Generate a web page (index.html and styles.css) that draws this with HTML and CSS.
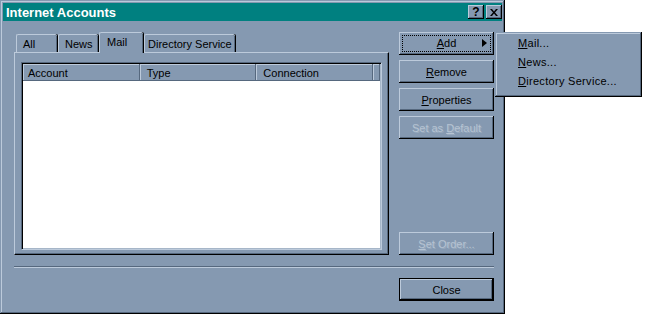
FILE: index.html
```html
<!DOCTYPE html>
<html lang="en">
<head>
    <meta charset="UTF-8">
    <meta name="viewport" content="width=device-width, initial-scale=1.0">
    <title>Internet Accounts</title>
    <link rel="stylesheet" href="styles.css">
</head>
<body>
    <div class="window">
        <div class="titlebar">
            <span class="title">Internet Accounts</span>
            <div class="title-buttons">
                <span class="tbtn">?</span>
                <span class="tbtn close-x">
                    <svg width="8" height="7" viewBox="0 0 8 7"><path d="M0 0h2l2 2.5L6 0h2L5 3.5 8 7H6L4 4.5 2 7H0l3-3.5z" fill="#000"/></svg>
                </span>
            </div>
        </div>

        <div class="dialog">
            <div class="main">
                <div class="tabs-area">
                    <div class="tabs">
                        <div class="tab tab-all">All</div>
                        <div class="tab tab-news">News</div>
                        <div class="tab tab-mail selected">Mail</div>
                        <div class="tab tab-dir">Directory Service</div>
                    </div>
                    <div class="panel">
                        <div class="listview">
                            <div class="lv-header">
                                <div class="col">Account</div>
                                <div class="col">Type</div>
                                <div class="col">Connection</div>
                                <div class="col filler"></div>
                            </div>
                            <div class="lv-body"></div>
                        </div>
                    </div>
                </div>

                <div class="buttons">
                    <button class="btn focused"><span class="focus-ring"><u>A</u>dd</span><span class="arrow"></span></button>
                    <button class="btn"><u>R</u>emove</button>
                    <button class="btn"><u>P</u>roperties</button>
                    <button class="btn disabled">Set as <u>D</u>efault</button>
                    <div class="spacer"></div>
                    <button class="btn disabled"><u>S</u>et Order...</button>
                </div>
            </div>

            <div class="separator"></div>

            <div class="footer">
                <button class="btn default">Close</button>
            </div>
        </div>
    </div>

    <!-- popup opened from the Add button -->
    <div class="menu">
        <div class="menu-item"><u>M</u>ail...</div>
        <div class="menu-item"><u>N</u>ews...</div>
        <div class="menu-item"><u>D</u>irectory Service...</div>
    </div>
</body>
</html>
```

FILE: styles.css
```css
body {
    margin: 0;
    background: #ffffff;
    font-family: "Liberation Sans", Arial, sans-serif;
    font-size: 11px;
    color: #000;
}
u { text-decoration: underline; text-underline-offset: 1px; }

.window {
    width: 505px;
    height: 314px;
    box-sizing: border-box;
    padding: 3px;
    background: #8599b1;
    box-shadow: inset -1px -1px #000, inset 1px 1px #8599b1,
                inset -2px -2px #56687e, inset 2px 2px #bccadb;
}

.titlebar {
    height: 18px;
    background: #008080;
    display: flex;
    align-items: center;
    justify-content: space-between;
}
.title {
    color: #fff;
    font-weight: bold;
    font-size: 13px;
    padding-left: 3px;
}
.title-buttons { display: flex; gap: 2px; }
.tbtn {
    width: 16px;
    height: 14px;
    box-sizing: border-box;
    background: #8599b1;
    box-shadow: inset -1px -1px #000, inset 1px 1px #bccadb, inset -2px -2px #56687e;
    display: flex;
    align-items: center;
    justify-content: center;
    font-weight: bold;
    font-size: 12px;
    line-height: 1;
}

.dialog { padding: 11px 8px 0 11px; }

.main { display: flex; height: 223px; }
.tabs-area { width: 375px; display: flex; flex-direction: column; }

.tabs {
    height: 20px;
    display: flex;
    align-items: flex-end;
    padding-left: 2px;
    position: relative;
    z-index: 1;
}
.tab {
    height: 18px;
    box-sizing: border-box;
    padding: 3px 0 0 6px;
    background: #8599b1;
    border-top: 1px solid #bccadb;
    border-left: 1px solid #bccadb;
    border-radius: 2px 2px 0 0;
    box-shadow: inset -1px 0 #56687e, 1px 0 #000;
    margin-right: 1px;
}
.tab-all { width: 41px; }
.tab-news { width: 40px; }
.tab-mail { width: 44px; }
.tab-dir { width: 91px; padding-left: 3px; }
.tab.selected {
    height: 21px;
    margin-bottom: -1px;
    padding: 3px 0 0 7px;
}

.panel {
    height: 203px;
    box-sizing: border-box;
    border-top: 1px solid #bccadb;
    border-left: 1px solid #bccadb;
    border-right: 1px solid #000;
    border-bottom: 1px solid #000;
    box-shadow: inset -1px -1px #56687e;
    padding: 9px 6px 4px 6px;
}

.listview {
    width: 361px;
    height: 188px;
    box-sizing: border-box;
    border-top: 1px solid #56687e;
    border-left: 1px solid #56687e;
    border-right: 1px solid #bccadb;
    border-bottom: 1px solid #bccadb;
    box-shadow: inset 1px 1px #000, inset -1px -1px #a6b6c8;
    padding: 1px;
    display: flex;
    flex-direction: column;
}
.lv-header { display: flex; height: 17px; flex: none; }
.col {
    width: 118px;
    box-sizing: border-box;
    padding: 3px 0 0 5px;
    background: #8599b1;
    box-shadow: inset -1px -1px #56687e, inset 1px 1px #bccadb;
}
.col + .col { padding-left: 7px; }
.col.filler { flex: 1; width: auto; }
.lv-body { flex: 1; background: #fff; }

.buttons {
    width: 95px;
    margin-left: 10px;
    display: flex;
    flex-direction: column;
    gap: 5px;
}
.spacer { flex: 1; }

.btn {
    height: 23px;
    width: 95px;
    flex: none;
    border: none;
    padding: 0;
    margin: 0;
    background: #8599b1;
    font-family: inherit;
    font-size: 11px;
    color: #000;
    position: relative;
    box-shadow: inset -1px -1px #000, inset 1px 1px #bccadb,
                inset -2px -2px #56687e, inset 2px 2px #8599b1;
}
.btn.disabled {
    color: #b6c3d2;
    text-shadow: 1px 1px 0 #97a9be;
}
.btn.focused .focus-ring {
    position: absolute;
    left: 4px; top: 4px; right: 4px; bottom: 4px;
    outline: 1px dotted #000;
    line-height: 15px;
}
.arrow {
    position: absolute;
    right: 7px;
    top: 7px;
    width: 0;
    height: 0;
    border-top: 4px solid transparent;
    border-bottom: 4px solid transparent;
    border-left: 5px solid #000;
}

.separator {
    margin-top: 11px;
    width: 480px;
    height: 1px;
    background: #56687e;
    border-bottom: 1px solid #bccadb;
}

.footer {
    display: flex;
    justify-content: flex-end;
    width: 480px;
    margin-top: 10px;
}
.btn.default {
    box-shadow: inset 0 0 0 1px #000, inset -2px -2px #000, inset 2px 2px #bccadb,
                inset -3px -3px #56687e;
}

.menu {
    position: absolute;
    left: 495px;
    top: 32px;
    width: 147px;
    height: 65px;
    box-sizing: border-box;
    background: #8599b1;
    padding: 3px 2px 2px 2px;
    box-shadow: inset -1px -1px #000, inset 1px 1px #8599b1,
                inset -2px -2px #56687e, inset 2px 2px #bccadb;
}
.menu-item {
    height: 19px;
    line-height: 17px;
    padding-left: 21px;
    letter-spacing: 0.3px;
}
```
